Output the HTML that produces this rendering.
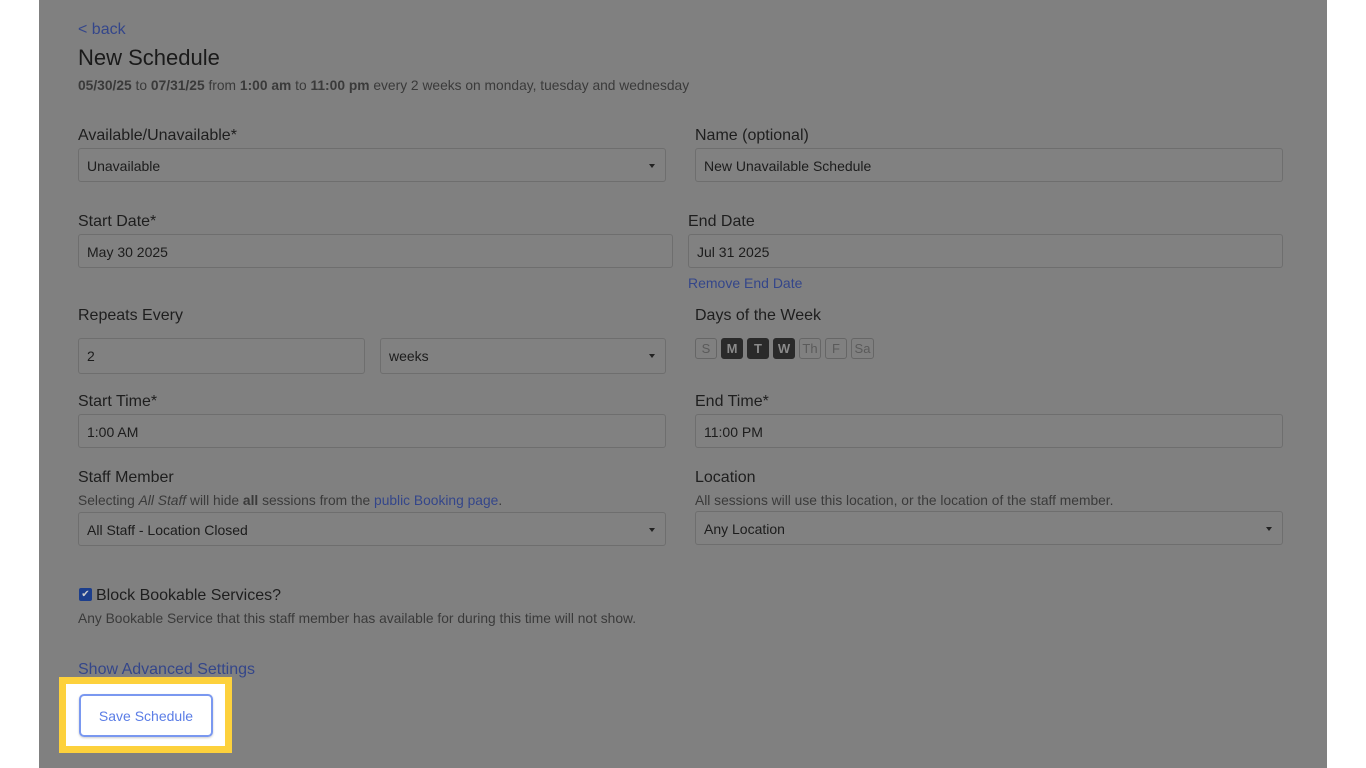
<!DOCTYPE html>
<html><head><meta charset="utf-8"><style>
body{margin:0;width:1366px;height:768px;background:#fff;font-family:"Liberation Sans",Arial,sans-serif;position:relative;overflow:hidden;color:#1c1c1c}
#m{position:absolute;left:39px;top:0;width:1288px;height:768px;background:#808080}
.a{position:absolute;white-space:nowrap}
.l{font-size:16px;color:#1e1e1e}
.in{position:absolute;height:34px;border:1px solid #6e6e6e;border-radius:3px;background:#818181;box-sizing:border-box;font-size:14px;color:#1c1c1c;padding:9px 8px}
.sel:after{content:"";position:absolute;right:10px;top:15px;border:3px solid transparent;border-top:4px solid #222;}
.s{font-size:13.8px;color:#3a3a3a}
.lk{color:#34468a}
.d{position:absolute;top:338px;height:21px;border:1px solid #666;border-radius:3px;box-sizing:border-box;font-size:13px;text-align:center;line-height:19px;color:#5a5a5a}
.d.on{background:#2a2a2a;color:#8a8a8a;border-color:#2a2a2a;font-weight:bold}
</style></head><body>
<div id="m"></div>
<div class="a lk" style="left:78px;top:21px;font-size:16px">&lt; back</div>
<div class="a" style="left:78px;top:45px;font-size:22px;color:#1a1a1a">New Schedule</div>
<div class="a s" style="left:78px;top:78px"><b>05/30/25</b> to <b>07/31/25</b> from <b>1:00 am</b> to <b>11:00 pm</b> every 2 weeks on monday, tuesday and wednesday</div>

<div class="a l" style="left:78px;top:127px">Available/Unavailable*</div>
<div class="in sel" style="left:78px;top:148px;width:588px">Unavailable</div>
<div class="a l" style="left:695px;top:127px">Name (optional)</div>
<div class="in" style="left:695px;top:148px;width:588px">New Unavailable Schedule</div>

<div class="a l" style="left:78px;top:213px">Start Date*</div>
<div class="in" style="left:78px;top:234px;width:595px">May 30 2025</div>
<div class="a l" style="left:688px;top:213px">End Date</div>
<div class="in" style="left:688px;top:234px;width:595px">Jul 31 2025</div>
<div class="a lk" style="left:688px;top:275px;font-size:14px">Remove End Date</div>

<div class="a l" style="left:78px;top:307px">Repeats Every</div>
<div class="in" style="left:78px;top:338px;width:287px;height:36px">2</div>
<div class="in sel" style="left:380px;top:338px;width:286px;height:36px">weeks</div>
<div class="a l" style="left:695px;top:307px">Days of the Week</div>
<div class="d" style="left:695px;width:22px">S</div>
<div class="d on" style="left:721px;width:22px">M</div>
<div class="d on" style="left:747px;width:22px">T</div>
<div class="d on" style="left:773px;width:22px">W</div>
<div class="d" style="left:799px;width:22px">Th</div>
<div class="d" style="left:825px;width:22px">F</div>
<div class="d" style="left:851px;width:23px">Sa</div>

<div class="a l" style="left:78px;top:393px">Start Time*</div>
<div class="in" style="left:78px;top:414px;width:588px">1:00 AM</div>
<div class="a l" style="left:695px;top:393px">End Time*</div>
<div class="in" style="left:695px;top:414px;width:588px">11:00 PM</div>

<div class="a l" style="left:78px;top:469px">Staff Member</div>
<div class="a s" style="left:78px;top:493px">Selecting <i>All Staff</i> will hide <b>all</b> sessions from the <span class="lk">public Booking page</span>.</div>
<div class="in sel" style="left:78px;top:512px;width:588px">All Staff - Location Closed</div>
<div class="a l" style="left:695px;top:469px">Location</div>
<div class="a s" style="left:695px;top:493px">All sessions will use this location, or the location of the staff member.</div>
<div class="in sel" style="left:695px;top:511px;width:588px">Any Location</div>

<div class="a" style="left:79px;top:588px;width:13px;height:13px;background:#1c3e8c;border-radius:2px;color:#ccc;font-size:10px;line-height:13px;text-align:center">✔</div>
<div class="a l" style="left:96px;top:587px">Block Bookable Services?</div>
<div class="a s" style="left:78px;top:611px">Any Bookable Service that this staff member has available for during this time will not show.</div>

<div class="a lk" style="left:78px;top:661px;font-size:16px">Show Advanced Settings</div>

<div class="a" style="left:59px;top:677px;width:159px;height:62px;border:7px solid #fdd13c;background:#fff"></div>
<div class="a" style="left:79px;top:694px;width:134px;height:43px;box-sizing:border-box;border:2px solid #7a98f0;border-radius:5px;color:#5b7de6;font-size:14px;text-align:center;line-height:41px;box-shadow:0 1px 2px rgba(0,0,0,.2)">Save Schedule</div>
</body></html>
